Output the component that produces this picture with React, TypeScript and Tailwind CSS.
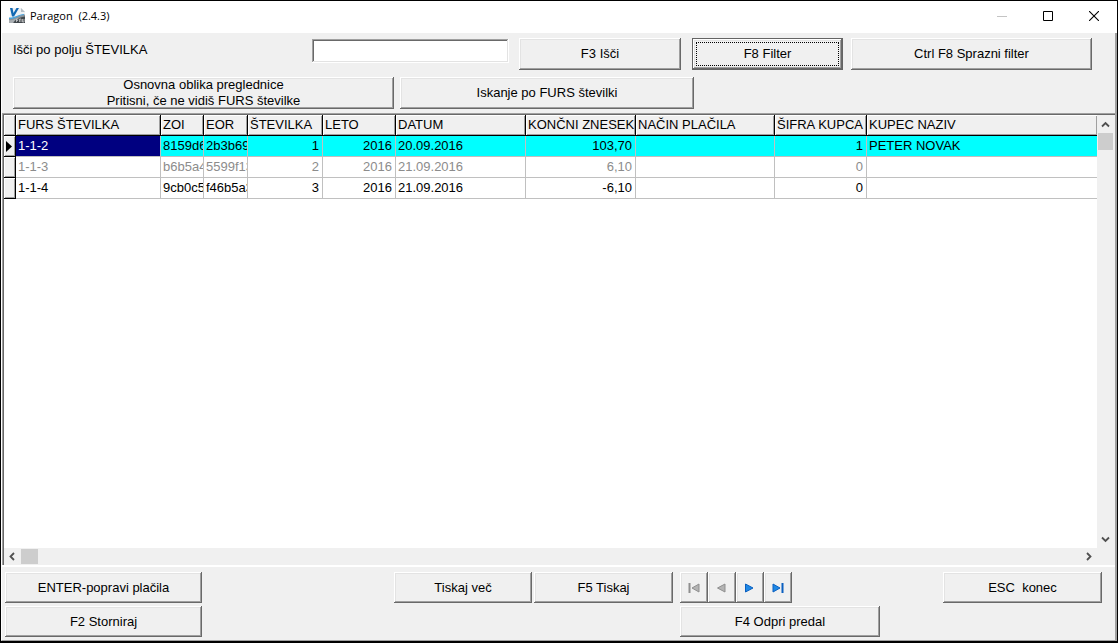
import { useState } from "react";
import type { ReactNode } from "react";

const columns = [
  { name: "FURS ŠTEVILKA", width: "w-[145px]", right: false },
  { name: "ZOI", width: "w-[43px]", right: false },
  { name: "EOR", width: "w-[44px]", right: false },
  { name: "ŠTEVILKA", width: "w-[75px]", right: true },
  { name: "LETO", width: "w-[73px]", right: true },
  { name: "DATUM", width: "w-[130px]", right: false },
  { name: "KONČNI ZNESEK", width: "w-[110px]", right: true },
  { name: "NAČIN PLAČILA", width: "w-[139px]", right: false },
  { name: "ŠIFRA KUPCA", width: "w-[92px]", right: true },
  { name: "KUPEC NAZIV", width: "", right: false },
];

const rows = [
  { muted: false, cells: ["1-1-2", "8159d6", "2b3b69", "1", "2016", "20.09.2016", "103,70", "", "1", "PETER NOVAK"] },
  { muted: true, cells: ["1-1-3", "b6b5a4", "5599f13", "2", "2016", "21.09.2016", "6,10", "", "0", ""] },
  { muted: false, cells: ["1-1-4", "9cb0c5", "f46b5a3", "3", "2016", "21.09.2016", "-6,10", "", "0", ""] },
];

const raised =
  "shadow-[inset_-1px_-1px_0_#696969,inset_1px_1px_0_#fff,inset_-2px_-2px_0_#a0a0a0,inset_2px_2px_0_#e3e3e3]";

type PushButtonProps = {
  className: string;
  children: ReactNode;
  label?: string;
  disabled?: boolean;
};

const PushButton = ({ className, children, label, disabled }: PushButtonProps) => (
  <button
    type="button"
    aria-label={label}
    disabled={disabled}
    className={`flex shrink-0 items-center justify-center bg-[#f0f0f0] text-center ${raised} ${className}`}
  >
    {children}
  </button>
);

const AppIcon = () => (
  <svg width="16" height="16" viewBox="0 0 16 16">
    <path d="M1 0h11l4 4v11H1z" fill="#eef1f4" />
    <path d="M12 0l4 4h-4z" fill="#b4bec6" />
    <path d="M0 10.500C5 11 9 7 16 6.500V15H0z" fill="#8b9298" />
    <path d="M4 15C7 11 11 9 16 8.500V15z" fill="#41474c" />
    <path d="M0 15v-3c3 .5 6-.5 8-2-2 2-3 3-4 5z" fill="#a9aeb2" />
    <path d="M0 9.500C5 10 9 6.500 15 6v1C9 7.500 6 11.500 0 11z" fill="#4aa3dc" />
    <path d="M1 0h2.500l1 5L7.500 0H10L5 8.500H3z" fill="#1168b3" />
    <path d="M7.500 14v-3h2M7.500 12.500h1.500M10.500 14v-3h1.500v3M13.500 11v3h1.500v-3" fill="none" stroke="#dcdcdc" strokeWidth=".7" />
  </svg>
);

const TitleBar = () => (
  <header className="flex h-8 shrink-0 items-center bg-white pb-[3px] pl-2">
    <AppIcon />
    <h1 className="ml-[5px] whitespace-pre font-['Open_Sans',sans-serif] text-[11px] leading-4">
      Paragon  (2.4.3)
    </h1>
    <div className="ml-auto flex h-full">
      <button type="button" aria-label="Minimize" className="flex w-[46px] items-center justify-center" disabled>
        <svg width="10" height="10" viewBox="0 0 10 10">
          <path d="M0 5.500h10" stroke="#c4c4c4" />
        </svg>
      </button>
      <button type="button" aria-label="Maximize" className="flex w-[46px] items-center justify-center">
        <svg width="10" height="10" viewBox="0 0 10 10">
          <path d="M.5.5h9v9h-9z" fill="none" stroke="#000" />
        </svg>
      </button>
      <button type="button" aria-label="Close" className="flex w-[46px] items-center justify-center">
        <svg width="10" height="10" viewBox="0 0 10 10">
          <path d="M0 0l10 10M10 0L0 10" stroke="#000" strokeWidth="1.1" />
        </svg>
      </button>
    </div>
  </header>
);

const Toolbar = () => {
  const [query, setQuery] = useState("");
  return (
    <section className="flex shrink-0 flex-col gap-[7px] pt-[5px] pb-1 pl-[11px]">
      <div className="flex">
        <label htmlFor="search" className="w-[299px] pt-1 leading-4">
          Išči po polju ŠTEVILKA
        </label>
        <input
          id="search"
          value={query}
          onChange={(e) => setQuery(e.target.value)}
          className="mt-px h-6 w-[197px] bg-white px-1 shadow-[inset_-1px_-1px_0_#fff,inset_1px_1px_0_#a0a0a0,inset_-2px_-2px_0_#e3e3e3,inset_2px_2px_0_#696969] outline-none"
        />
        <PushButton className="ml-[10px] h-8 w-[162px]">F3 Išči</PushButton>
        <div className="ml-[11px] flex border border-[#646464]">
          <PushButton className="h-[30px] w-[149px] outline-1 -outline-offset-4 outline-dotted outline-black">
            F8 Filter
          </PushButton>
        </div>
        <PushButton className="ml-2 h-8 w-[241px]">Ctrl F8 Sprazni filter</PushButton>
      </div>
      <div className="flex gap-[6px]">
        <PushButton className="h-8 w-[381px] leading-4">
          Osnovna oblika preglednice
          <br />
          Pritisni, če ne vidiš FURS številke
        </PushButton>
        <PushButton className="h-8 w-[294px]">Iskanje po FURS številki</PushButton>
      </div>
    </section>
  );
};

const headCell =
  "h-[21px] overflow-hidden border-r border-b border-black bg-[#f0f0f0] p-0 pl-[2px] text-left font-normal whitespace-nowrap shadow-[inset_1px_1px_0_#fff,inset_-1px_-1px_0_#a0a0a0]";

const RecordTable = () => (
  <table className="w-full table-fixed border-separate border-spacing-0 leading-4">
    <colgroup>
      <col className="w-3" />
      {columns.map((col) => (
        <col key={col.name} className={col.width} />
      ))}
    </colgroup>
    <thead>
      <tr>
        <th className={headCell} />
        {columns.map((col) => (
          <th key={col.name} className={`${headCell} last:border-r-0`}>
            {col.name}
          </th>
        ))}
      </tr>
    </thead>
    <tbody>
      {rows.map((row, r) => (
        <tr key={row.cells[0]} className={r === 0 ? "bg-[#00ffff]" : row.muted ? "text-[#8c8c8c]" : ""}>
          <th className={headCell}>
            {r === 0 && (
              <svg width="6" height="11" viewBox="0 0 6 11">
                <path d="M0 0l6 5.500-6 5.500z" />
              </svg>
            )}
          </th>
          {row.cells.map((cell, c) => (
            <td
              key={c}
              className={`h-[21px] overflow-hidden border-r border-b border-[#c0c0c0] p-0 whitespace-nowrap last:border-r-0 ${
                columns[c].right ? "pr-[3px] text-right" : "pl-[2px]"
              } ${r === 0 && c === 0 ? "bg-[#000080] text-white" : ""}`}
            >
              {cell}
            </td>
          ))}
        </tr>
      ))}
    </tbody>
  </table>
);

const Chevron = ({ d }: { d: string }) => (
  <svg width="9" height="9" viewBox="0 0 9 9" className="shrink-0">
    <path d={d} fill="none" stroke="#505050" strokeWidth="1.8" />
  </svg>
);

const Grid = () => (
  <main className="flex min-h-0 flex-1 flex-col border-b-2 border-white bg-[#f0f0f0] pl-[2px] pt-[2px] pr-px shadow-[inset_1px_1px_0_#a0a0a0,inset_2px_2px_0_#696969]">
    <div className="flex min-h-0 flex-1">
      <div className="min-w-0 flex-1 bg-white">
        <RecordTable />
      </div>
      <div className="flex w-[17px] flex-col items-center justify-between">
        <div className="flex flex-col items-center gap-1 pt-[5px]">
          <Chevron d="M1 6.500l3.500-3.500 3.500 3.500" />
          <div className="h-[17px] w-[15px] bg-[#cdcdcd]" />
        </div>
        <div className="pb-1">
          <Chevron d="M1 2.500l3.500 3.500 3.500-3.500" />
        </div>
      </div>
    </div>
    <div className="flex h-[17px] shrink-0 items-center justify-between pr-[21px] pl-1">
      <div className="flex items-center gap-1">
        <Chevron d="M6 1l-3.500 3.500 3.500 3.500" />
        <div className="h-[15px] w-[17px] bg-[#cdcdcd]" />
      </div>
      <Chevron d="M3 1l3.500 3.500-3.500 3.500" />
    </div>
  </main>
);

const NavIcon = ({ shape, bar, off }: { shape: string; bar?: string; off?: boolean }) => (
  <svg width="12" height="10" viewBox="0 0 12 10">
    <path d={shape} fill={off ? "#b4b4b4" : "#1e88e5"} stroke={off ? "#8f8f8f" : "#0a5fc0"} />
    {bar && <path d={bar} stroke={off ? "#8f8f8f" : "#0a5fc0"} strokeWidth="2" />}
  </svg>
);

const Footer = () => (
  <footer className="flex shrink-0 flex-col gap-[3px] pt-[5px] pb-[3px] pl-[3px]">
    <div className="flex">
      <PushButton className="h-[31px] w-[197px]">ENTER-popravi plačila</PushButton>
      <PushButton className="ml-[192px] h-[31px] w-[138px]">Tiskaj več</PushButton>
      <PushButton className="ml-[2px] h-[31px] w-[139px]">F5 Tiskaj</PushButton>
      <div className="ml-[7px] flex">
        <PushButton className="h-[31px] w-7" label="Prvi" disabled>
          <NavIcon off shape="M11 1v8L4 5z" bar="M1.500 0v10" />
        </PushButton>
        <PushButton className="h-[31px] w-7" label="Prejšnji" disabled>
          <NavIcon off shape="M9 1v8L1.500 5z" />
        </PushButton>
        <PushButton className="h-[31px] w-7" label="Naslednji">
          <NavIcon shape="M1.500 1v8L9 5z" />
        </PushButton>
        <PushButton className="h-[31px] w-7" label="Zadnji">
          <NavIcon shape="M1 1v8l7-4z" bar="M10.500 0v10" />
        </PushButton>
      </div>
      <PushButton className="mr-[13px] ml-auto h-[31px] w-[159px] whitespace-pre">ESC  konec</PushButton>
    </div>
    <div className="flex">
      <PushButton className="h-[31px] w-[197px]">F2 Storniraj</PushButton>
      <PushButton className="ml-[478px] h-[31px] w-[200px]">F4 Odpri predal</PushButton>
    </div>
  </footer>
);

export default function App() {
  return (
    <div className="flex min-h-screen flex-col border border-b-2 border-black bg-white font-['Liberation_Sans',sans-serif] text-[13px] text-black">
      <TitleBar />
      <div className="flex flex-1 flex-col border-r-2 border-b border-l border-[#a0a0a0] border-l-white bg-[#f0f0f0]">
        <Toolbar />
        <Grid />
        <Footer />
      </div>
    </div>
  );
}
